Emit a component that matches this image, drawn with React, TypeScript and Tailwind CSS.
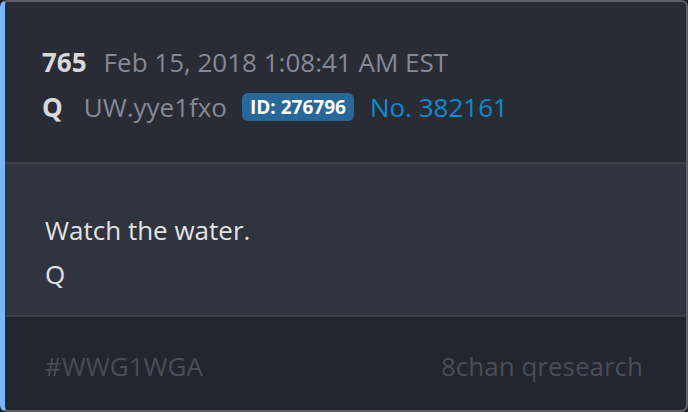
import React from 'react';

const font = { fontFamily: '"Open Sans", "Liberation Sans", sans-serif' };

export default function App() {
  return (
    <div className="w-[688px] h-[412px] bg-[#1d1f24]" style={font}>
      <div className="flex h-full flex-col overflow-hidden rounded-[7px] border-2 border-l-[5px] border-[#5d6068] border-l-[#79b6fc] bg-[#23262e]">
        {/* header */}
        <div className="flex h-[160px] flex-col justify-center gap-[9px] bg-[#292c35] pl-[37px] pt-[4px]">
          <div className="flex items-baseline text-[26px] leading-[36px]">
            <span className="font-bold text-[#d9d9db]">765</span>
            <span className="ml-[17px] text-[#868995]">Feb 15, 2018 1:08:41 AM EST</span>
          </div>
          <div className="flex items-center text-[26px] leading-[36px]">
            <span className="font-bold text-[#d9d9db]">Q</span>
            <span className="ml-[21px] text-[#868995]">UW.yye1fxo</span>
            <span className="ml-[15px] rounded-[6px] bg-[#27679a] px-[8px] text-[19px] leading-[28px] font-bold text-white">
              ID: 276796
            </span>
            <span className="ml-[16px] text-[#0c8bd0]">No. 382161</span>
          </div>
        </div>
        <div className="h-[2px] bg-[#3b3f48]" />
        {/* body */}
        <div className="flex h-[151px] flex-col bg-[#2f343e] pl-[40px] pt-[44px] text-[26px] leading-[44px] text-[#e2e2e4]">
          <span>Watch the water.</span>
          <span>Q</span>
        </div>
        <div className="h-[2px] bg-[#3b3f48]" />
        {/* footer */}
        <div className="flex flex-1 items-center justify-between pl-[40px] pr-[43px] pt-[6px] text-[26px] text-[#494d57]">
          <span>#WWG1WGA</span>
          <span>8chan qresearch</span>
        </div>
      </div>
    </div>
  );
}
